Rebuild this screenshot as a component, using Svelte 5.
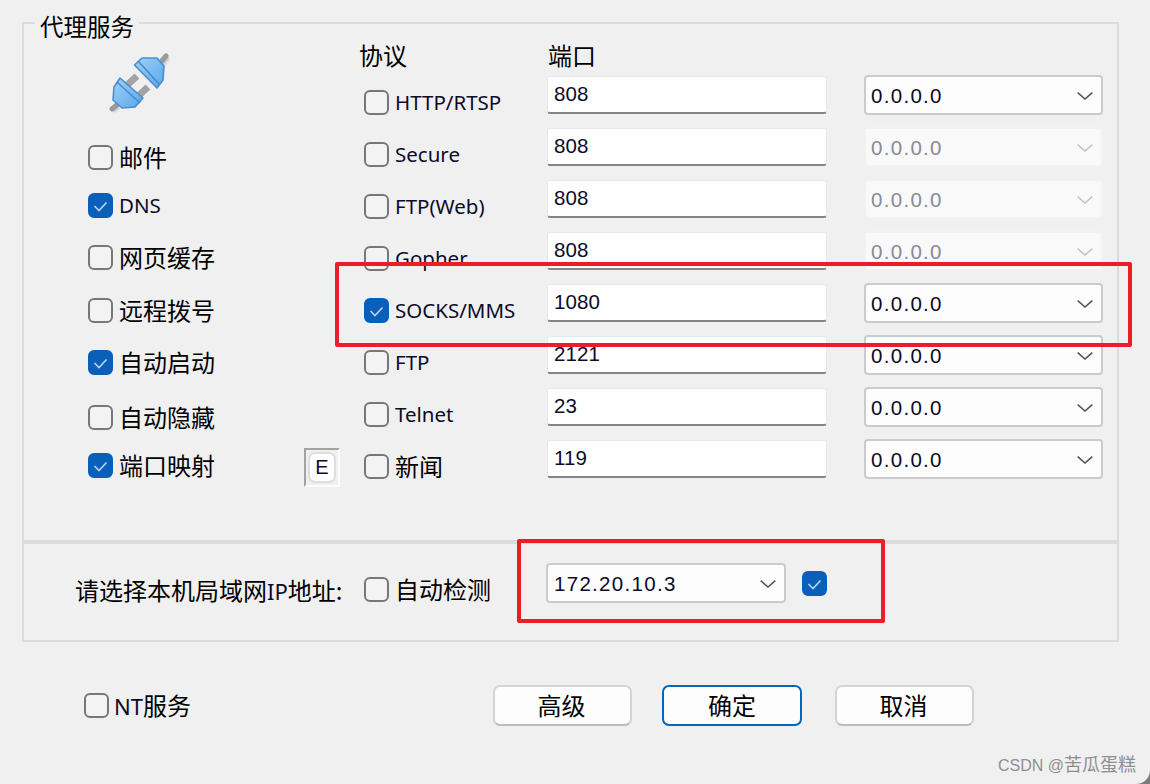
<script>
  const services = [
    { label: '邮件', checked: false },
    { label: 'DNS', checked: true, latin: true },
    { label: '网页缓存', checked: false },
    { label: '远程拨号', checked: false },
    { label: '自动启动', checked: true },
    { label: '自动隐藏', checked: false },
    { label: '端口映射', checked: true, extra: true }
  ];
  const protocols = [
    { label: 'HTTP/RTSP', port: '808' },
    { label: 'Secure', port: '808', disabled: true },
    { label: 'FTP(Web)', port: '808', disabled: true },
    { label: 'Gopher', port: '808', disabled: true },
    { label: 'SOCKS/MMS', port: '1080', checked: true },
    { label: 'FTP', port: '2121' },
    { label: 'Telnet', port: '23' },
    { label: '新闻', port: '119', cjk: true }
  ];
</script>

{#snippet box(checked)}
  <span class="box" class:on={checked}>
    {#if checked}
      <svg viewBox="0 0 25 25" width="25" height="25"><path d="M6.5 13l4.500 4.500 7.500-8" fill="none" stroke="#b9d5f2" stroke-width="1.6"/></svg>
    {/if}
  </span>
{/snippet}

{#snippet chevron(disabled)}
  <svg class="chev" class:dim={disabled} viewBox="0 0 16 8" width="16" height="8"><path d="M.7.7L8 7l7.3-6.3" fill="none" stroke="currentColor" stroke-width="1.6"/></svg>
{/snippet}

<div class="dialog">
  <div class="panel">
    <div class="legend">代理服务</div>
    <section class="top">
      <div class="left">
        <div class="plug">
          <svg viewBox="0 0 62 62" width="62" height="62">
            <defs>
              <linearGradient id="g" x1="0" y1="0" x2="1" y2="1">
                <stop offset="0" stop-color="#9dd2f8"/><stop offset="1" stop-color="#5aa6e8"/>
              </linearGradient>
              <filter id="s" x="-20%" y="-20%" width="140%" height="140%">
                <feGaussianBlur stdDeviation="1"/>
              </filter>
            </defs>
            <g transform="translate(-108 -53)">
              <path d="M113 111l5-5M162 64l6-7" stroke="#8a8a8a" stroke-width="5" opacity=".4" filter="url(#s)" fill="none"/>
              <path d="M112 109l6-5M160 63l6-7" stroke="#9a9a9a" stroke-width="5" stroke-linecap="round" fill="none"/>
              <path d="M125 87l12-11M136 98l12-11" stroke="#a3a3a3" stroke-width="7" fill="none"/>
              <path d="M134.500 65l7.500-7h15l7 8-1 14-6 8z" fill="url(#g)" stroke="#4a8ecb" stroke-width="1.6" stroke-linejoin="round"/>
              <path d="M138 61l21 23" stroke="#3f87c8" stroke-width="1.3" fill="none"/>
              <path d="M120 78l-6 9-1 13 9 8 13-1 8-9z" fill="url(#g)" stroke="#4a8ecb" stroke-width="1.6" stroke-linejoin="round"/>
              <path d="M117 82l23 21" stroke="#3f87c8" stroke-width="1.3" fill="none"/>
            </g>
          </svg>
        </div>
        {#each services as s}
          <div class="row-left">
            {@render box(s.checked)}
            <span class={s.latin ? 'latin' : 'cjk'}>{s.label}</span>
            {#if s.extra}
              <span class="ebox"><span class="ebtn">E</span></span>
            {/if}
          </div>
        {/each}
      </div>

      <div class="right">
        <div class="heads">
          <span class="cjk">协议</span>
          <span class="cjk">端口</span>
        </div>
        {#each protocols as p}
          <div class="row-right">
            <div class="proto">
              {@render box(p.checked)}
              <span class={p.cjk ? 'cjk' : 'latin'}>{p.label}</span>
            </div>
            <div class="input">{p.port}</div>
            <div class="select" class:disabled={p.disabled}>
              <span class="ip">0.0.0.0</span>
              {@render chevron(p.disabled)}
            </div>
          </div>
        {/each}
      </div>
    </section>

    <section class="lan">
      <span class="cjk lan-label">请选择本机局域网<span class="latin">IP</span>地址:</span>
      <div class="auto">{@render box(false)}<span class="cjk">自动检测</span></div>
      <div class="select lan-select">
        <span class="ip">172.20.10.3</span>
        {@render chevron(false)}
      </div>
      <div class="lan-check">{@render box(true)}</div>
    </section>
  </div>

  <footer class="footer">
    <div class="nt">{@render box(false)}<span class="cjk"><span class="latin">NT</span>服务</span></div>
    <button class="btn">高级</button>
    <button class="btn primary">确定</button>
    <button class="btn last">取消</button>
  </footer>

  <div class="mark one"></div>
  <div class="mark two"></div>
  <div class="watermark">CSDN @<span class="wm-cjk">苦瓜蛋糕</span></div>
</div>

<style>
  :global(body) {
    margin: 0;
    background: #7d7d7d;
  }
  .dialog {
    position: relative;
    width: 1150px;
    height: 784px;
    box-sizing: border-box;
    padding: 22px 0 0 22px;
    overflow: hidden;
    background: #f0f0f0;
    border-bottom-right-radius: 14px;
    color: #000;
    font-family: "Noto Sans CJK SC", "Liberation Sans", sans-serif;
  }
  .cjk {
    font-family: "Noto Sans CJK SC", sans-serif;
    font-size: 24px;
    line-height: 32px;
    white-space: nowrap;
  }
  .latin {
    font-family: "Noto Sans", "Liberation Sans", sans-serif;
    font-size: 20.5px;
    line-height: 32px;
    color: #0b0b2a;
    white-space: nowrap;
  }
  .cjk .latin {
    font-size: 22px;
  }
  .panel {
    position: relative;
    box-sizing: border-box;
    width: 1097px;
    height: 620px;
    border: 2px solid #dcdcdc;
  }
  .legend {
    position: absolute;
    left: 11px;
    top: -14px;
    padding: 0 5px;
    background: #f0f0f0;
    font-size: 23.5px;
    line-height: 32px;
  }
  .top {
    display: flex;
    box-sizing: border-box;
    height: 520px;
    border-bottom: 4px solid #dcdcdc;
  }
  .left {
    box-sizing: border-box;
    width: 336px;
    padding-left: 64px;
    padding-right: 20px;
    display: grid;
    grid-template-rows: 108px 50px 46px 58px 48px 56px 54px 42px;
  }
  .plug {
    padding: 29px 0 0 20px;
  }
  .plug svg {
    display: block;
  }
  .row-left {
    display: flex;
    align-items: center;
    gap: 6px;
  }
  .box {
    flex: none;
    box-sizing: border-box;
    display: block;
    width: 25px;
    height: 25px;
    border: 2px solid #777;
    border-radius: 6px;
    background: #f3f3f3;
    position: relative;
  }
  .box.on {
    border-color: #0a5fb8;
    background: #0a5fb8;
  }
  .box svg {
    position: absolute;
    left: -2px;
    top: -2px;
  }
  .ebox {
    box-sizing: border-box;
    width: 36px;
    height: 39px;
    margin: 5px 0 0 auto;
    padding: 2px;
    display: flex;
    border: 2px solid;
    border-color: #a3a3a3 #fdfdfd #fdfdfd #a3a3a3;
    font-family: "Liberation Sans", sans-serif;
    font-size: 20px;
  }
  .ebtn {
    flex: 1;
    display: flex;
    align-items: center;
    justify-content: center;
    background: #fff;
    border: 2px solid #dedede;
    border-radius: 7px;
    color: #0b0b2a;
  }
  .right {
    width: 743px;
    margin-left: -1px;
  }
  .heads {
    height: 52px;
    box-sizing: border-box;
    padding-top: 15px;
    display: grid;
    grid-template-columns: 189px 1fr;
  }
  .row-right {
    display: grid;
    grid-template-columns: 188px 280px 276px;
    height: 52px;
  }
  .proto {
    display: flex;
    align-items: center;
    gap: 6px;
    padding-left: 5px;
  }
  .input {
    box-sizing: border-box;
    height: 38px;
    padding-left: 6px;
    background: #fff;
    border: 1px solid #e9e9e9;
    border-bottom: 2px solid #858585;
    border-radius: 3px;
    font-family: "Liberation Sans", sans-serif;
    font-size: 20.5px;
    line-height: 34px;
    letter-spacing: 0.1px;
    color: #0b0b2a;
  }
  .select {
    box-sizing: border-box;
    height: 40px;
    margin: -1px 0 0 37px;
    display: flex;
    align-items: center;
    justify-content: space-between;
    padding: 2px 8px 0 5px;
    background: #fdfdfd;
    border: 2px solid #cbcbcb;
    border-radius: 4px;
    color: #0b0b2a;
  }
  .select.disabled {
    background: #f9f9f9;
    border-color: #f2f2f2;
    color: #8a8a9a;
  }
  .ip {
    font-family: "Liberation Sans", sans-serif;
    font-size: 20.5px;
    letter-spacing: 1.3px;
  }
  .chev {
    flex: none;
    color: #555;
    margin-top: -1px;
  }
  .chev.dim {
    color: #c4c4c4;
  }
  .lan {
    display: flex;
    align-items: flex-start;
    height: 96px;
    padding-left: 51px;
  }
  .lan-label {
    width: 289px;
    margin-top: 30px;
  }
  .auto {
    width: 182px;
    margin-top: 29px;
    display: flex;
    align-items: center;
    gap: 6px;
  }
  .lan-select {
    width: 240px;
    margin: 19px 0 0;
    flex: none;
    padding-left: 6px;
  }
  .lan-check {
    margin: 27px 0 0 16px;
  }
  .footer {
    display: flex;
    align-items: center;
    height: 40px;
    margin: 43px 0 0 62px;
  }
  .nt {
    width: 409px;
    display: flex;
    align-items: center;
    gap: 5px;
  }
  .btn {
    box-sizing: border-box;
    width: 139px;
    height: 41px;
    padding: 0 2px 2px 0;
    background: #fdfdfd;
    border: 2px solid #d4d4d4;
    border-bottom-color: #bdbdbd;
    border-radius: 7px;
    font-family: "Noto Sans CJK SC", sans-serif;
    font-size: 24px;
    color: #000;
  }
  .primary {
    width: 140px;
    margin-left: 30px;
    padding-right: 0;
    border-color: #0067c0;
  }
  .last {
    margin-left: 33px;
  }
  .mark {
    position: absolute;
    box-sizing: border-box;
    border: 4px solid #ed1c2b;
    border-radius: 2px;
  }
  .one {
    left: 335px;
    top: 262px;
    width: 797px;
    height: 85px;
  }
  .two {
    left: 517px;
    top: 539px;
    width: 368px;
    height: 84px;
  }
  .watermark {
    position: absolute;
    left: 998px;
    top: 753px;
    font-family: "Liberation Sans", "Noto Sans CJK SC", sans-serif;
    font-size: 16px;
    line-height: 24px;
    color: #8f8f8f;
    white-space: nowrap;
  }
  .wm-cjk {
    font-size: 18px;
  }
</style>
